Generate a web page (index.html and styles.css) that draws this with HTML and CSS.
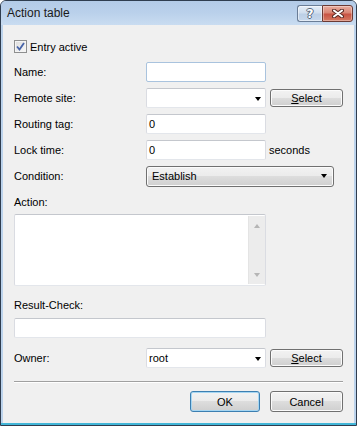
FILE: index.html
```html
<!DOCTYPE html>
<html>
<head>
<meta charset="utf-8">
<link rel="stylesheet" href="styles.css">
</head>
<body>
<div class="window">
  <div class="titlebar">
    <span class="title">Action table</span>
    <div class="caption">
      <div class="cap help"><span>?</span></div>
      <div class="cap close">
        <svg width="12" height="9" viewBox="0 0 12 9"><path d="M2 1.5 L10 7.5 M10 1.5 L2 7.5" stroke="#5a2a24" stroke-width="4" stroke-linecap="round"/><path d="M2 1.5 L10 7.5 M10 1.5 L2 7.5" stroke="#fff" stroke-width="2" stroke-linecap="round"/></svg>
      </div>
    </div>
  </div>
  <div class="client">
    <div class="check-row">
      <span class="checkbox"><svg width="9" height="9" viewBox="0 0 9 9"><path d="M1 4.5 L3.5 7.5 L8 1" fill="none" stroke="#4663a8" stroke-width="1.8"/></svg></span>
      <span>Entry active</span>
    </div>
    <div class="grid">
      <div class="label">Name:</div>
      <div class="field name"></div>
      <div></div>

      <div class="label">Remote site:</div>
      <div class="field combo"><span class="arrow"></span></div>
      <div class="btn select"><u>S</u>elect</div>

      <div class="label">Routing tag:</div>
      <div class="field"><span class="val">0</span></div>
      <div></div>

      <div class="label">Lock time:</div>
      <div class="field"><span class="val">0</span></div>
      <div class="unit">seconds</div>

      <div class="label">Condition:</div>
      <div class="dropdown"><span>Establish</span><span class="arrow"></span></div>
    </div>

    <div class="label block action-label">Action:</div>
    <div class="textarea">
      <div class="scrollbar">
        <span class="sarrow up"></span>
        <span class="sarrow down"></span>
      </div>
    </div>

    <div class="label block result-label">Result-Check:</div>
    <div class="field wide"></div>

    <div class="grid owner">
      <div class="label">Owner:</div>
      <div class="field combo"><span class="val">root</span><span class="arrow"></span></div>
      <div class="btn select"><u>S</u>elect</div>
    </div>

    <div class="sep"></div>

    <div class="actions">
      <div class="btn ok">OK</div>
      <div class="btn cancel">Cancel</div>
    </div>
  </div>
</div>
</body>
</html>
```

FILE: styles.css
```css
html, body {
  margin: 0;
  padding: 0;
  background: #ffffff;
}

body {
  font-family: "Liberation Sans", Arial, sans-serif;
  font-size: 11px;
  color: #000;
}

.window {
  width: 357px;
  height: 426px;
  box-sizing: border-box;
  border: 1px solid #2f3d4f;
  border-radius: 6px 6px 0 0;
  background: #bcd3ec;
  padding: 0 2px 2px 2px;
  display: flex;
  flex-direction: column;
  box-shadow: inset 0 -2px 0 #42b6d8;
}

.titlebar {
  height: 24px;
  flex: none;
  display: flex;
  align-items: flex-start;
  justify-content: space-between;
  margin: 0 -2px;
  padding: 0 3px 0 6px;
  border-radius: 5px 5px 0 0;
  background: linear-gradient(#b3cbe7 0%, #bad1eb 50%, #c9dcf1 100%);
}

.title {
  font-size: 12px;
  line-height: 24px;
  color: #1a1a1a;
}

.caption {
  display: flex;
  margin-top: 4px;
}

.cap {
  height: 17px;
  box-sizing: border-box;
  display: flex;
  align-items: center;
  justify-content: center;
}

.help {
  width: 25px;
  border: 1px solid #6a7d96;
  border-right: none;
  border-radius: 3px 0 0 3px;
  background: linear-gradient(#e6eef8 0%, #d0deee 45%, #bccfe6 55%, #c7d8ec 100%);
  box-shadow: inset 0 0 0 1px rgba(255,255,255,0.5);
}

.help span {
  font-family: "DejaVu Sans", sans-serif;
  font-weight: bold;
  font-size: 12px;
  line-height: 12px;
  color: #fff;
  text-shadow: 1px 0 0 #56667a, -1px 0 0 #56667a, 0 1px 0 #56667a, 0 -1px 0 #56667a;
}

.close {
  width: 31px;
  border: 1px solid #6b3a34;
  border-radius: 0 3px 3px 0;
  background: linear-gradient(#e9ad9f 0%, #d98574 45%, #c85343 55%, #d67a62 100%);
  box-shadow: inset 0 0 0 1px rgba(255,255,255,0.35);
}

.client {
  flex: 1;
  background: #f0f0f0;
  padding: 15px 10px 0 11px;
  display: flex;
  flex-direction: column;
}

.check-row {
  display: flex;
  align-items: center;
  height: 13px;
  gap: 3px;
}

.checkbox {
  width: 13px;
  height: 13px;
  box-sizing: border-box;
  border: 1px solid #8e8f8f;
  background: linear-gradient(135deg, #dcdcdc, #f8f8f8);
  box-shadow: inset 0 0 0 1px #f4f4f4;
  display: flex;
  align-items: center;
  justify-content: center;
}

.grid {
  display: grid;
  grid-template-columns: 128px 120px 73px;
  column-gap: 4px;
  grid-auto-rows: 20px;
  row-gap: 6px;
  align-items: center;
  margin-top: 9px;
}

.grid > .dropdown {
  grid-column: 2 / span 2;
  width: 188px;
  height: 21px;
}

.label {
  line-height: 13px;
}

.field {
  height: 20px;
  box-sizing: border-box;
  background: #fff;
  border: 1px solid;
  border-color: #c4c7cd #dadce2 #e3e6eb #dadce2;
  border-radius: 2px;
  position: relative;
  display: flex;
  align-items: center;
  padding-left: 2px;
}

.field.name {
  border-color: #a9c3de;
}

.val {
  line-height: 13px;
}

.combo .arrow {
  position: absolute;
  right: 4px;
  top: 8px;
}

.arrow {
  width: 0;
  height: 0;
  border-left: 3.5px solid transparent;
  border-right: 3.5px solid transparent;
  border-top: 4px solid #000;
}

.unit {
  margin-left: -1px;
}

.btn {
  box-sizing: border-box;
  border: 1px solid #707070;
  border-radius: 3px;
  background: linear-gradient(#f2f2f2 0%, #ebebeb 50%, #dddddd 50%, #cfcfcf 100%);
  box-shadow: inset 0 0 0 1px #fbfbfb;
  display: flex;
  align-items: center;
  justify-content: center;
}

.select {
  height: 18px;
}

.dropdown {
  box-sizing: border-box;
  border: 1px solid #707070;
  border-radius: 3px;
  background: linear-gradient(#f2f2f2 0%, #ebebeb 50%, #dddddd 50%, #cfcfcf 100%);
  box-shadow: inset 0 0 0 1px #fbfbfb;
  display: flex;
  align-items: center;
  justify-content: space-between;
  padding: 0 6px 0 5px;
}

.block.action-label {
  margin-top: 10px;
}

.textarea {
  margin-top: 5px;
  width: 252px;
  height: 72px;
  box-sizing: border-box;
  background: #fff;
  border: 1px solid;
  border-color: #c4c7cd #dadce2 #e3e6eb #dadce2;
  border-radius: 2px;
  display: flex;
  justify-content: flex-end;
}

.scrollbar {
  width: 16px;
  margin: 1px 0;
  background: #ececec;
  border-left: 1px solid #e4e4e4;
  display: flex;
  flex-direction: column;
  align-items: center;
  justify-content: space-between;
  padding: 8px 0 7px;
}

.sarrow {
  width: 0;
  height: 0;
  border-left: 3.5px solid transparent;
  border-right: 3.5px solid transparent;
}

.sarrow.up {
  border-bottom: 4px solid #b5b5b5;
}

.sarrow.down {
  border-top: 4px solid #b5b5b5;
}

.block.result-label {
  margin-top: 13px;
}

.field.wide {
  width: 252px;
  margin-top: 6px;
}

.grid.owner {
  margin-top: 10px;
}

.sep {
  margin-top: 13px;
  height: 1px;
  width: 329px;
  background: #a0a0a0;
  border-bottom: 1px solid #ffffff;
}

.actions {
  margin-top: 8px;
  display: flex;
  justify-content: flex-end;
  gap: 10px;
  width: 329px;
}

.actions .btn {
  height: 21px;
}

.ok {
  width: 70px;
  border-color: #3c7fb1;
  box-shadow: inset 0 0 0 1px #a6d6f2;
}

.cancel {
  width: 73px;
}
```
